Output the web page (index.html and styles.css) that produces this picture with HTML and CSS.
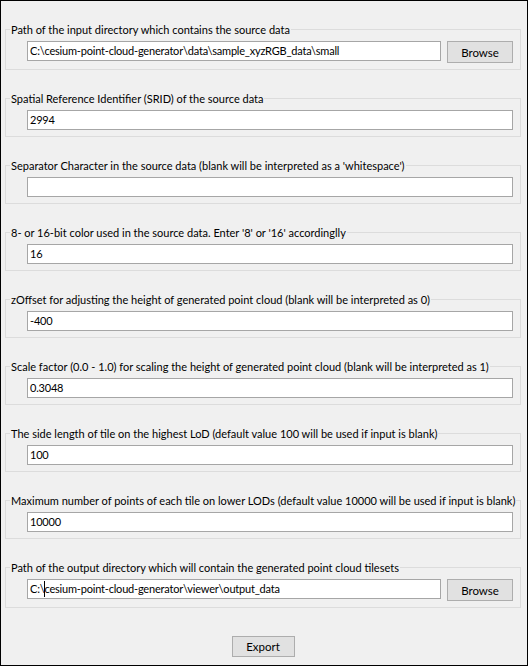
FILE: index.html
```html
<!DOCTYPE html>
<html>
<head>
<meta charset="utf-8">
<link rel="stylesheet" href="styles.css">
</head>
<body>
<div class="window">
  <fieldset class="group">
    <legend>Path of the input directory which contains the source data</legend>
    <div class="row">
      <div class="field short">C:\cesium-point-cloud-generator\data\sample_xyzRGB_data\small</div>
      <button class="btn browse">Browse</button>
    </div>
  </fieldset>
  <fieldset class="group">
    <legend>Spatial Reference Identifier (SRID) of the source data</legend>
    <div class="row"><div class="field">2994</div></div>
  </fieldset>
  <fieldset class="group">
    <legend>Separator Character in the source data (blank will be interpreted as a 'whitespace')</legend>
    <div class="row"><div class="field"></div></div>
  </fieldset>
  <fieldset class="group">
    <legend>8- or 16-bit color used in the source data. Enter '8' or '16' accordinglly</legend>
    <div class="row"><div class="field">16</div></div>
  </fieldset>
  <fieldset class="group">
    <legend>zOffset for adjusting the height of generated point cloud (blank will be interpreted as 0)</legend>
    <div class="row"><div class="field">-400</div></div>
  </fieldset>
  <fieldset class="group">
    <legend>Scale factor (0.0 - 1.0) for scaling the height of generated point cloud (blank will be interpreted as 1)</legend>
    <div class="row"><div class="field">0.3048</div></div>
  </fieldset>
  <fieldset class="group">
    <legend>The side length of tile on the highest LoD (default value 100 will be used if input is blank)</legend>
    <div class="row"><div class="field">100</div></div>
  </fieldset>
  <fieldset class="group">
    <legend>Maximum number of points of each tile on lower LODs (default value 10000 will be used if input is blank)</legend>
    <div class="row"><div class="field">10000</div></div>
  </fieldset>
  <fieldset class="group">
    <legend>Path of the output directory which will contain the generated point cloud tilesets</legend>
    <div class="row">
      <div class="field short">C:\<span class="caret"></span>cesium-point-cloud-generator\viewer\output_data</div>
      <button class="btn browse">Browse</button>
    </div>
  </fieldset>
  <div class="actions">
    <button class="btn export">Export</button>
  </div>
</div>
</body>
</html>
```

FILE: styles.css
```css
html, body {
  margin: 0;
  padding: 0;
  background: #f0f0f0;
}

.window {
  box-sizing: border-box;
  width: 528px;
  height: 666px;
  border: 1px solid #000;
  background: #f0f0f0;
  padding: 21px 6px 0 4px;
  font-family: Lato, "Noto Sans", sans-serif;
  font-size: 11px;
  color: #000;
}

.group {
  margin: 0 0 21px 0;
  padding: 0;
  border: 1px solid #dcdcdc;
  min-width: 0;
}

.group legend {
  margin-left: 4px;
  padding: 0 1px;
  line-height: 15px;
  white-space: nowrap;
}

.row {
  display: flex;
  gap: 6px;
  margin-top: 4px;
  padding: 0 7px 6px 21px;
  align-items: flex-start;
}

.field {
  box-sizing: border-box;
  flex: 1;
  height: 20px;
  border: 1px solid #a6a6a6;
  background: #fff;
  padding: 0 2px;
  line-height: 18px;
  letter-spacing: -0.2px;
  white-space: nowrap;
  overflow: hidden;
}

.caret {
  display: inline-block;
  width: 1px;
  height: 16px;
  background: #000;
  vertical-align: -4px;
  margin-right: -1px;
}

.btn {
  box-sizing: border-box;
  border: 1px solid #adadad;
  background: #e1e1e1;
  font-family: inherit;
  font-size: 11.5px;
  color: #000;
  padding: 0;
  margin: 0;
}

.browse {
  width: 66px;
  height: 22px;
}

.actions {
  display: flex;
  justify-content: center;
  margin-top: 28px;
}

.export {
  width: 63px;
  height: 21px;
}
```
